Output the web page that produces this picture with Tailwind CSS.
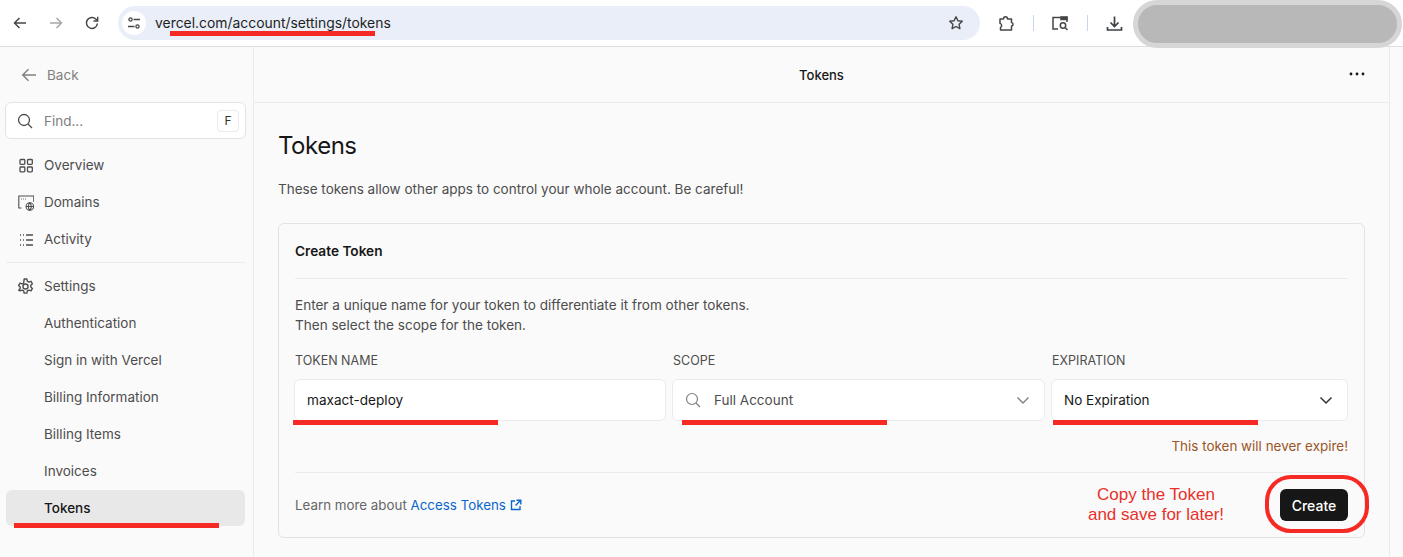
<!DOCTYPE html>
<html><head><meta charset="utf-8">
<script src="https://cdn.jsdelivr.net/npm/@tailwindcss/browser@4"></script>
</head>
<body class="bg-white">
<div class="relative w-[1403px] h-[557px] overflow-hidden bg-[#fafafa] font-['Inter',sans-serif] text-[13.500px] text-[#4d4d4d]">
  <!-- browser bar -->
  <header class="h-[47px] bg-white border-b border-[#dedede] flex items-center pl-[12px] text-[#3c4043]">
    <svg class="w-[16px] h-[16px]" viewBox="0 0 16 16" fill="none" stroke="#444746" stroke-width="1.5"><path d="M14 8H2.500M7.500 3 2.500 8l5 5"/></svg>
    <svg class="w-[16px] h-[16px] ml-[20px]" viewBox="0 0 16 16" fill="none" stroke="#a8a8a8" stroke-width="1.5"><path d="M2 8h11.500M8.500 3l5 5-5 5"/></svg>
    <svg class="w-[16px] h-[16px] ml-[20px]" viewBox="0 0 16 16" fill="none" stroke="#444746" stroke-width="1.5"><path d="M13.400 8.500A5.500 5.500 0 1 1 11.800 4L13.500 5.600"/><path d="M13.700 1.800v4.200H9.500" stroke-width="1.400"/></svg>
    <div class="ml-[18px] w-[862px] h-[34px] rounded-full bg-[#e9eef8] flex items-center pl-[4px] pr-[16px] shrink-0">
      <div class="w-[24px] h-[24px] rounded-full bg-white flex items-center justify-center">
        <svg class="w-[14px] h-[14px]" viewBox="0 0 14 14" fill="none" stroke="#444746" stroke-width="1.300"><circle cx="3.500" cy="3.500" r="1.600"/><path d="M6.500 3.500H13M1 10.500h6.500"/><circle cx="10.500" cy="10.500" r="1.600"/></svg>
      </div>
      <span class="ml-[9px] text-[13.900px] text-[#1f1f1f] whitespace-nowrap">vercel.com/account/settings/tokens</span>
      <svg class="ml-auto w-[16px] h-[16px]" viewBox="0 0 16 16" fill="none" stroke="#444746" stroke-width="1.400" stroke-linejoin="round"><path d="m8 1.800 1.900 4 4.400.5-3.200 3 .8 4.400L8 11.500l-3.900 2.200.8-4.400-3.200-3 4.400-.5z"/></svg>
    </div>
    <svg class="w-[17px] h-[17px] ml-[18px] shrink-0" viewBox="0 0 17 17" fill="none" stroke="#444746" stroke-width="1.500" stroke-linejoin="round"><path d="M2 4h3.500c0-3 4-3 4 0h4v3.500c2 0 2 3.500 0 3.500v4H2.500v-2.500c1.500-1 1.500-3 0-4H2z"/></svg>
    <div class="w-px h-[16px] bg-[#c8d6ee] ml-[18px] shrink-0"></div>
    <svg class="w-[18px] h-[16px] ml-[17px] shrink-0" viewBox="0 0 18 16" fill="none" stroke="#444746" stroke-width="1.500"><path d="M7 14H2V2.500h14V7"/><path d="M10 2h6v2.500h-6z" fill="#444746"/><circle cx="12" cy="10.500" r="2.700"/><path d="m14 12.500 2.500 2.500"/></svg>
    <div class="w-px h-[16px] bg-[#c8d6ee] ml-[18px] shrink-0"></div>
    <svg class="w-[17px] h-[17px] ml-[18px] shrink-0" viewBox="0 0 17 17" fill="none" stroke="#3c4043" stroke-width="1.700"><path d="M8.500 1.500v9.500M4.500 7.500l4 4 4-4M1.500 12v3h14v-3"/></svg>
    <div class="ml-[10px] w-[269px] h-[48px] -mb-[2px] rounded-full bg-[#b8b8b8] border-[5px] border-[#d6d6d6] shrink-0"></div>
  </header>

  <div class="flex h-[510px]">
    <!-- sidebar -->
    <aside class="w-[254px] shrink-0 border-r border-[#ebebeb] pl-[5px]">
      <div class="h-[56px] flex items-center pl-[16px] gap-[10px] text-[#808080]">
        <svg class="w-[16px] h-[16px]" viewBox="0 0 16 16" fill="none" stroke="#808080" stroke-width="1.400"><path d="M15 8H1.500M7.500 2.200 1.700 8l5.800 5.800"/></svg>
        <span>Back</span>
      </div>
      <div class="w-[241px] h-[37px] -mt-[1px] bg-white border border-[#e3e3e3] rounded-[6px] flex items-center pl-[11px] pr-[6px]">
        <svg class="w-[16px] h-[16px] shrink-0" viewBox="0 0 16 16" fill="none" stroke="#4d4d4d" stroke-width="1.300"><circle cx="7" cy="7" r="5.500"/><path d="m11 11 4 4"/></svg>
        <span class="ml-[11px] mt-[1px] text-[#808080]">Find...</span>
        <span class="ml-auto w-[22px] h-[22px] rounded-[4px] border border-[#ebebeb] flex items-center justify-center text-[12px] text-[#333]">F</span>
      </div>
      <nav class="mt-[8px] ml-[1px] w-[239px]">
        <a class="h-[37px] flex items-center pl-[12px] gap-[10px]">
          <svg class="w-[16px] h-[16px]" viewBox="0 0 16 16" fill="none" stroke="#4d4d4d" stroke-width="1.300"><rect x="2" y="1.500" width="4.800" height="4.800" rx=".8"/><rect x="9.500" y="1.500" width="4.800" height="4.800" rx=".8"/><rect x="2" y="9" width="4.800" height="4.800" rx=".8"/><rect x="9.500" y="9" width="4.800" height="4.800" rx=".8"/></svg>
          <span>Overview</span></a>
        <a class="h-[37px] flex items-center pl-[12px] gap-[10px]">
          <svg class="w-[16px] h-[16px]" viewBox="0 0 16 16" fill="none" stroke="#4d4d4d" stroke-width="1.100"><path d="M3.500 13H.8V1h15v6"/><path d="M3 4h.8M5 4h.8M7 4h.8" /><circle cx="11.800" cy="11.500" r="3.800"/><path d="M8 11.500h7.600M11.800 7.700c-2 2.500-2 5.100 0 7.600 2-2.500 2-5.100 0-7.600"/></svg>
          <span>Domains</span></a>
        <a class="h-[37px] flex items-center pl-[12px] gap-[10px]">
          <svg class="w-[16px] h-[16px]" viewBox="0 0 16 16" fill="none" stroke="#4d4d4d" stroke-width="1.300"><path d="M2 3h1M5 3h1M2 8h1M5 8h1M2 13h1M5 13h1M8 3h7M8 8h7M8 13h7"/></svg>
          <span>Activity</span></a>
        <div class="h-px bg-[#ebebeb] mt-[4px] mb-[5px]"></div>
        <a class="h-[37px] flex items-center pl-[12px] gap-[10px]">
          <svg class="w-[17px] h-[17px] -ml-[1px]" viewBox="0 0 16 16" fill="none" stroke="#4d4d4d" stroke-width="1.300" stroke-linejoin="round"><circle cx="8" cy="8" r="2.400"/><path d="M6.700 1h2.600l.4 2 1.500.8 2-.7 1.300 2.300-1.500 1.400v1.600l1.500 1.400-1.300 2.300-2-.7-1.500.8-.4 2H6.700l-.4-2-1.500-.8-2 .7L1.500 11.500 3 10.100V8.500L1.500 7.100 2.800 4.800l2 .7 1.500-.8z"/></svg>
          <span>Settings</span></a>
        <a class="h-[37px] flex items-center pl-[38px]">Authentication</a>
        <a class="h-[37px] flex items-center pl-[38px]">Sign in with Vercel</a>
        <a class="h-[37px] flex items-center pl-[38px]">Billing Information</a>
        <a class="h-[37px] flex items-center pl-[38px]">Billing Items</a>
        <a class="h-[37px] flex items-center pl-[38px]">Invoices</a>
        <a class="h-[36px] flex items-center pl-[38px] bg-[#e8e8e8] rounded-[6px] text-[#171717] font-medium">Tokens</a>
      </nav>
    </aside>

    <!-- main -->
    <main class="w-[1136px] shrink-0 border-r border-[#ebebeb]">
      <div class="h-[56px] border-b border-[#ebebeb] relative flex items-center justify-center pt-[2px]">
        <span class="text-[#171717] font-medium text-[13px]">Tokens</span>
        <svg class="absolute right-[24px] top-[24px] w-[16px] h-[6px]" viewBox="0 0 16 6" fill="#171717"><circle cx="2" cy="3" r="1.400"/><circle cx="8" cy="3" r="1.400"/><circle cx="14" cy="3" r="1.400"/></svg>
      </div>
      <div class="pl-[24px]">
        <h1 class="mt-[27px] h-[32px] flex items-center text-[24px] leading-[32px] text-[#171717] tracking-[-0.5px]">Tokens</h1>
        <p class="mt-[17px] leading-[20px] text-[#4d4d4d] text-[13.500px]">These tokens allow other apps to control your whole account. Be careful!</p>
        <section class="mt-[24px] w-[1087px] h-[315px] border border-[#e3e3e3] rounded-[6px] px-[16px]">
          <div class="h-[55px] border-b border-[#ebebeb] flex items-center text-[#171717] font-semibold text-[13.650px]">Create Token</div>
          <p class="mt-[16px] leading-[20px] text-[#4d4d4d] text-[13.550px]">Enter a unique name for your token to differentiate it from other tokens.<br>Then select the scope for the token.</p>
          <div class="mt-[16px] flex gap-[6px] -ml-[1px] text-[12.500px]">
            <div class="w-[372px]">
              <label class="block h-[20px] leading-[20px] pl-[1px] text-[#4d4d4d] mb-[8px]">TOKEN NAME</label>
              <div class="h-[42px] bg-white border border-[#ebebeb] rounded-[6px] flex items-center pl-[12px] text-[13.600px] text-[#171717]">maxact-deploy</div>
            </div>
            <div class="w-[373px]">
              <label class="block h-[20px] leading-[20px] pl-[1px] text-[#4d4d4d] mb-[8px]">SCOPE</label>
              <div class="h-[42px] bg-white border border-[#ebebeb] rounded-[6px] flex items-center pl-[12px] pr-[14px] text-[13.500px] text-[#4d4d4d]">
                <svg class="w-[16px] h-[16px] shrink-0" viewBox="0 0 16 16" fill="none" stroke="#808080" stroke-width="1.200"><circle cx="7" cy="7" r="5.500"/><path d="m11 11 4 4"/></svg>
                <span class="ml-[13px]">Full Account</span>
                <svg class="ml-auto w-[14px] h-[14px]" viewBox="0 0 14 14" fill="none" stroke="#808080" stroke-width="1.400"><path d="m1.500 4.500 5.500 5.500 5.500-5.500"/></svg>
              </div>
            </div>
            <div class="w-[297px]">
              <label class="block h-[20px] leading-[20px] pl-[1px] text-[#4d4d4d] mb-[8px]">EXPIRATION</label>
              <div class="h-[42px] bg-white border border-[#ebebeb] rounded-[6px] flex items-center pl-[12px] pr-[14px] text-[13.500px] text-[#171717]">
                <span>No Expiration</span>
                <svg class="ml-auto w-[14px] h-[14px]" viewBox="0 0 14 14" fill="none" stroke="#333" stroke-width="1.500"><path d="m1.500 4.500 5.500 5.500 5.500-5.500"/></svg>
              </div>
            </div>
          </div>
          <p class="mt-[15px] text-right leading-[20px] text-[13.450px] text-[#9a5527]">This token will never expire!</p>
          <div class="mt-[16px] border-t border-[#ebebeb] h-[65px] flex items-center justify-between">
            <span class="text-[13.350px] text-[#666]">Learn more about <a class="text-[#0a66d0]">Access Tokens</a>
              <svg class="inline-block w-[12px] h-[12px] -mt-[2px]" viewBox="0 0 12 12" fill="none" stroke="#0a66d0" stroke-width="1.400"><path d="M5 2H1.500v8.500H10V7M6.500 1.200h4.300v4.300M10.500 1.500 5.500 6.500"/></svg></span>
            <button class="w-[68px] h-[32px] bg-[#171717] text-white rounded-[6px] text-[14px] font-medium">Create</button>
          </div>
        </section>
      </div>
    </main>
  </div>

  <!-- annotations -->
  <div class="absolute left-[170px] top-[31px] w-[205px] h-[5px] bg-[#f52a24]"></div>
  <div class="absolute left-[14px] top-[523px] w-[205px] h-[5px] bg-[#f52a24]"></div>
  <div class="absolute left-[293px] top-[420px] w-[205px] h-[5px] bg-[#f52a24]"></div>
  <div class="absolute left-[682px] top-[420px] w-[205px] h-[5px] bg-[#f52a24]"></div>
  <div class="absolute left-[1053px] top-[420px] w-[205px] h-[5px] bg-[#f52a24]"></div>
  <div class="absolute left-[1265px] top-[475px] w-[104px] h-[58px] border-[4px] border-[#f52a24] rounded-[26px]"></div>
  <div class="absolute left-[1056px] top-[485px] w-[200px] text-center font-['Liberation_Sans',sans-serif] text-[17px] leading-[20px] text-[#e8302a]">Copy the Token<br>and save for later!</div>
</div>
</body></html>
